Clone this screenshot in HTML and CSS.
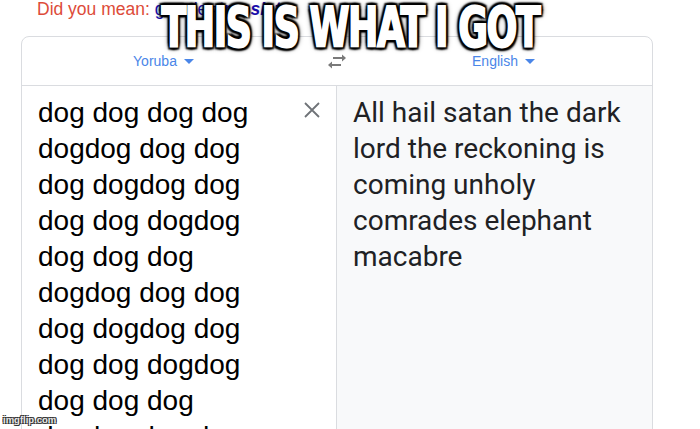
FILE: index.html
```html
<!DOCTYPE html>
<html>
<head>
<meta charset="utf-8">
<link rel="stylesheet" href="styles.css">
</head>
<body>
<div class="page">
  <div class="suggest">Did you mean: <span class="sugg-link">google=<b><i>translate</i></b></span></div>
  <div class="card">
    <div class="langs">
      <div class="lang">Yoruba<span class="caret"></span></div>
      <div class="swap">
        <svg width="24" height="16" viewBox="0 0 24 16">
          <path d="M8 5H19" stroke="#7a7a7a" stroke-width="2" fill="none"/>
          <path d="M17 1.5L21 5L17 8.5Z" fill="#7a7a7a"/>
          <path d="M5 12H16" stroke="#7a7a7a" stroke-width="2" fill="none"/>
          <path d="M7 8.5L3 12L7 15.5Z" fill="#7a7a7a"/>
        </svg>
      </div>
      <div class="lang lang-right">English<span class="caret"></span></div>
    </div>
    <div class="panes">
      <div class="src">
        <div class="src-text">dog dog dog dog<br>dogdog dog dog<br>dog dogdog dog<br>dog dog dogdog<br>dog dog dog<br>dogdog dog dog<br>dog dogdog dog<br>dog dog dogdog<br>dog dog dog<br>dogdog dog dog</div>
        <svg class="clear" width="16" height="16" viewBox="0 0 16 16">
          <path d="M1 1L15 15M15 1L1 15" stroke="#6f7378" stroke-width="1.8" fill="none"/>
        </svg>
      </div>
      <div class="tgt">All hail satan the dark lord the reckoning is coming unholy comrades elephant macabre</div>
    </div>
  </div>
  <div class="meme"><span class="meme-text">THIS IS WHAT I GOT</span></div>
  <div class="watermark">imgflip.com</div>
</div>
</body>
</html>
```
FILE: styles.css
```css
html, body {
  margin: 0;
  padding: 0;
  background: #ffffff;
  overflow: hidden;
}
.page {
  position: relative;
  width: 700px;
  height: 429px;
  overflow: hidden;
}
.suggest {
  font-family: "Liberation Sans", Arial, sans-serif;
  font-size: 17.5px;
  line-height: 18px;
  height: 18px;
  color: #dd4b39;
  padding-left: 37px;
}
.sugg-link {
  color: #1a0dab;
}
.card {
  margin-top: 18px;
  margin-left: 21px;
  width: 630px;
  border: 1px solid #dadce0;
  border-radius: 8px 8px 0 0;
  background: #ffffff;
}
.langs {
  display: grid;
  grid-template-columns: 283px 64px 1fr;
  height: 48px;
  border-bottom: 1px solid #dadce0;
  align-items: center;
}
.lang {
  font-family: "Liberation Sans", Arial, sans-serif;
  font-size: 14px;
  color: #4a86e8;
  text-align: center;
}
.lang-right {
  padding-right: 14px;
}
.caret {
  display: inline-block;
  width: 0;
  height: 0;
  border-left: 5px solid transparent;
  border-right: 5px solid transparent;
  border-top: 5px solid #4a86e8;
  margin-left: 7px;
  vertical-align: 2px;
}
.swap {
  display: flex;
  justify-content: center;
  align-items: center;
}
.panes {
  display: grid;
  grid-template-columns: 315px 1fr;
  height: 420px;
}
.src {
  display: flex;
  align-items: flex-start;
  padding: 9px 16px 0 16px;
  border-right: 1px solid #dadce0;
}
.src-text {
  flex: 1;
  font-family: "Liberation Sans", Arial, sans-serif;
  font-size: 28px;
  line-height: 36px;
  color: #000000;
}
.clear {
  margin-top: 7px;
  flex: none;
}
.tgt {
  background: #f8f9fa;
  padding: 9px 16px 0 16px;
  font-family: Roboto, "Liberation Sans", sans-serif;
  font-size: 28px;
  line-height: 36px;
  color: #202124;
}
.meme {
  position: absolute;
  top: -5px;
  left: 0;
  right: 0;
  display: flex;
  justify-content: center;
}
.meme-text {
  display: inline-block;
  white-space: nowrap;
  font-family: "DejaVu Sans Condensed", "DejaVu Sans", sans-serif;
  font-weight: bold;
  font-size: 56px;
  line-height: 64px;
  letter-spacing: -2px;
  color: #ffffff;
  transform: scaleX(0.72);
  -webkit-text-stroke: 2px #ffffff;
  text-shadow: 3px 3px 2px #000, -3px -3px 2px #000, 3px -3px 2px #000, -3px 3px 2px #000, 0 3px 2px #000, 0 -3px 2px #000, 3px 0 2px #000, -3px 0 2px #000, 0 0 7px #000;
}
.watermark {
  position: absolute;
  left: 3px;
  bottom: 3px;
  font-family: "Liberation Sans", Arial, sans-serif;
  font-weight: bold;
  font-size: 9.5px;
  line-height: 12px;
  color: #e8e8e8;
  text-shadow: 1px 1px 0 #333, -1px -1px 0 #333, 1px -1px 0 #333, -1px 1px 0 #333;
}
```
